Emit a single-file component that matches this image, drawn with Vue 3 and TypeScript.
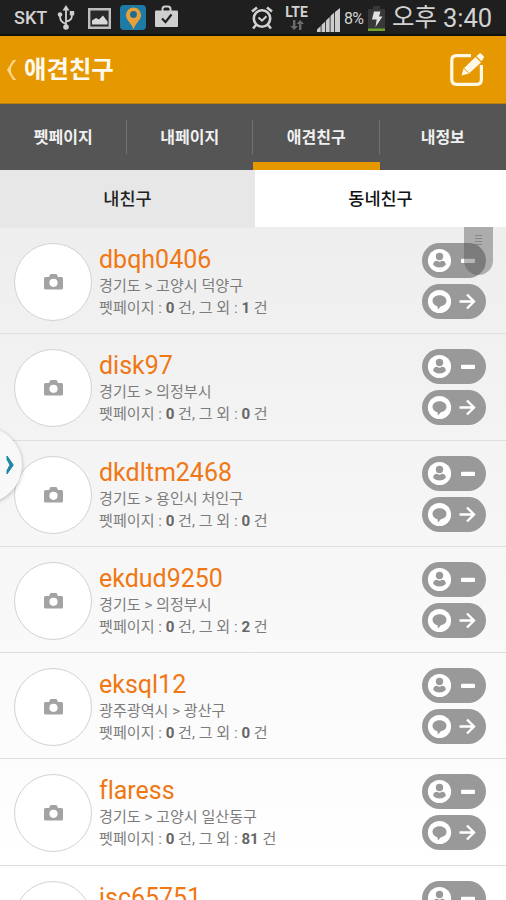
<script setup lang="ts">
interface Friend {
  name: string
  region?: string
  pets: number
  others: number
}

const tabs: string[] = ['펫페이지', '내페이지', '애견친구', '내정보']
const activeTab = 2

const friends: Friend[] = [
  { name: 'dbqh0406', region: '경기도 > 고양시 덕양구', pets: 0, others: 1 },
  { name: 'disk97', region: '경기도 > 의정부시', pets: 0, others: 0 },
  { name: 'dkdltm2468', region: '경기도 > 용인시 처인구', pets: 0, others: 0 },
  { name: 'ekdud9250', region: '경기도 > 의정부시', pets: 0, others: 2 },
  { name: 'eksql12', region: '광주광역시 > 광산구', pets: 0, others: 0 },
  { name: 'flaress', region: '경기도 > 고양시 일산동구', pets: 0, others: 81 },
  { name: 'jsc65751', pets: 0, others: 0 },
]
</script>

<template>
  <div class="screen">
    <header class="status">
      <div class="status-left">
        <span class="carrier">SKT</span>
        <svg class="usb" width="18" height="26" viewBox="0 0 18 26" fill="none" stroke="#cfcfcf" stroke-width="1.8">
          <path d="M9 3v19M9 19c-5-2-6-4-6-8M9 16.500c5-1 6-3 6-7" />
          <path d="M9 0l3.500 5.500h-7z" fill="#cfcfcf" stroke="none" />
          <circle cx="9" cy="22" r="2.800" fill="#cfcfcf" stroke="none" />
          <circle cx="3" cy="9.500" r="2.300" fill="#cfcfcf" stroke="none" />
          <path d="M12.800 6h4.400v4.400h-4.400z" fill="#cfcfcf" stroke="none" />
        </svg>
        <svg class="photo" width="23" height="21" viewBox="0 0 23 21">
          <path d="M1.200 1.200h20.600v18.600H1.200z" fill="#292929" stroke="#bdbdbd" stroke-width="2.400" />
          <path d="M4 16.500v-4l4-2.500 3 1.500 4-4 4.500 6v3z" fill="#d8d8d8" />
        </svg>
        <svg class="pin" width="26" height="25" viewBox="0 0 26 25">
          <rect width="26" height="25" rx="4" fill="#1d7ba6" />
          <path d="M13.500 24.500C12 18.500 6 15.500 6 10a7.500 7.500 0 0 1 15 0c0 5.500-6 8.500-7.500 14.500z" fill="#e8a13a" />
          <circle cx="13.500" cy="9.500" r="3.400" fill="#1d6c92" />
        </svg>
        <svg class="bag" width="23" height="23" viewBox="0 0 23 23">
          <path d="M7.500 7V4q0-2.500 2.500-2.500h3q2.500 0 2.500 2.500v3" fill="none" stroke="#cfcfcf" stroke-width="2" />
          <rect y="5.500" width="23" height="16.500" rx="1" fill="#cfcfcf" />
          <path d="M7 13.500l3.500 3.500 6-7.500" fill="none" stroke="#222" stroke-width="2.200" />
        </svg>
      </div>
      <div class="status-right">
        <svg class="alarm" width="24" height="25" viewBox="0 0 23 25" fill="none" stroke="#d2d2d2">
          <circle cx="11.500" cy="13.500" r="8.200" stroke-width="2.600" />
          <path d="M1.500 6.500l5-4M21.500 6.500l-5-4M5.500 20l-3 3.500M17.500 20l3 3.500" stroke-width="2.600" />
          <path d="M8 12.500l3.500 3.200 4.500-4.500" stroke-width="2" />
        </svg>
        <div class="network">
          <span class="lte">LTE</span>
          <svg width="14" height="10" viewBox="0 0 14 10" fill="#6b6b6b">
            <path d="M3 0h2.400v6H8L4.200 10 .4 6H3zM9 10h2.400V4H14L10.200 0 6.600 4H9z" />
          </svg>
        </div>
        <svg class="signal" width="23" height="24" viewBox="0 0 23 24" fill="#cdcdcd">
          <path d="M0 24v-2.500L3.700 18v6zM4.500 24v-7L8.200 13.500V24zM9 24V12.500L12.700 9v15zM13.500 24V8l3.700-3.500V24zM18 24V4l5-4v24z" />
        </svg>
        <span class="percent">8%</span>
        <svg class="battery" width="17" height="25" viewBox="0 0 17 25">
          <path d="M5 0h7v3h5v22H0V3h5z" fill="#383838" />
          <path d="M0 22.500h17V25H0z" fill="#71a52c" />
          <path d="M6 5.500h6.500L11 10.500h3.500L7.500 21l1.200-7.500H4z" fill="#e2e2e2" />
        </svg>
        <span class="ampm">오후</span>
        <span class="clock">3:40</span>
      </div>
    </header>

    <div class="titlebar">
      <svg class="back" width="10" height="20" viewBox="0 0 10 20">
        <path d="M9.500 0C4 6 4 8 4 10s0 4 5.500 10H6L0 10 6 0z" fill="#ffd58b" />
      </svg>
      <h1>애견친구</h1>
      <svg class="compose" width="34" height="34" viewBox="0 0 34 34">
        <path d="M21 2.700H6.500Q1.800 2.700 1.800 7.400v19.200q0 4.700 4.700 4.700h20.200q4.700 0 4.700-4.700V12" fill="none" stroke="#fff8e6" stroke-width="3.200" />
        <path d="M11.500 22.500l2-7L25.500 4l5.500 5.500L19 20.500zM26.500 3.200L29.200.7q1.200-.8 2.300.2l2 2q1 1.200 0 2.300L31.500 8.200z" fill="#fff8e6" />
        <path d="M13.800 15.200l5 4.800" stroke="#e69800" stroke-width="1" />
      </svg>
    </div>

    <nav class="tabs">
      <div v-for="(tab, i) in tabs" :key="tab" class="tab" :class="{ active: i === activeTab }">{{ tab }}</div>
    </nav>

    <div class="subtabs">
      <div class="subtab">내친구</div>
      <div class="subtab selected">동네친구</div>
    </div>

    <main class="list">
      <article v-for="friend in friends" :key="friend.name" class="row">
        <div class="avatar">
          <svg width="19" height="16" viewBox="0 0 19 16">
            <path d="M1.500 3H5l1-2.200Q6.300 0 7 0h5q.7 0 1 .8L14 3h3.500q1.500 0 1.500 1.500V14q0 1.500-1.500 1.500h-16Q0 15.500 0 14V4.500Q0 3 1.500 3z" fill="#a3a3a3" />
            <circle cx="9.500" cy="8.800" r="4.100" fill="#fff" />
          </svg>
        </div>
        <div class="info">
          <div class="name">{{ friend.name }}</div>
          <template v-if="friend.region">
            <div class="line">{{ friend.region }}</div>
            <div class="line">펫페이지 : <b>{{ friend.pets }}</b> 건, 그 외 : <b>{{ friend.others }}</b> 건</div>
          </template>
        </div>
        <div class="actions">
          <svg width="64" height="35" viewBox="0 0 64 35">
            <rect width="64" height="35" rx="17.500" fill="#999" />
            <circle cx="17.500" cy="17.500" r="11.600" fill="#fff" />
            <circle cx="17.500" cy="13.500" r="3.700" fill="#999" />
            <path d="M11.200 22q0-4.200 4-4.200 2.300 1.800 4.600 0 4 0 4 4.200-2.800 2.500-6.300 2.500T11.200 22z" fill="#999" />
            <rect x="39" y="15.800" width="14" height="4.200" rx="1" fill="#fff" />
          </svg>
          <svg width="64" height="35" viewBox="0 0 64 35">
            <rect width="64" height="35" rx="17.500" fill="#999" />
            <circle cx="17.500" cy="17.500" r="11.600" fill="#fff" />
            <path d="M17.500 11.200c4 0 7 2.300 7 5.600 0 3-2.400 5-5.700 5.500L16 25.400l-.6-3.200c-2.800-.7-4.900-2.600-4.900-5.400 0-3.300 3-5.600 7-5.600z" fill="#999" />
            <path d="M37.500 17.500h14M45 10.500l7 7-7 7" fill="none" stroke="#fff" stroke-width="2.400" />
          </svg>
        </div>
      </article>
    </main>

    <div class="scroll-thumb"><i></i><i></i><i></i><i></i></div>
    <div class="drawer-handle">
      <svg width="9" height="20" viewBox="0 0 9 20">
        <path d="M1 1l6.300 9L1 19V15.500L4 10 1 4.500z" fill="#1d86a3" stroke="#1d86a3" stroke-width="1" />
      </svg>
    </div>
  </div>
</template>

<style>
body {
  margin: 0;
}
</style>

<style scoped>
.screen {
  position: relative;
  width: 506px;
  height: 900px;
  overflow: hidden;
  display: flex;
  flex-direction: column;
  background: #eee;
  font-family: Roboto, 'Noto Sans CJK KR', sans-serif;
}
.status {
  flex: none;
  height: 36px;
  box-sizing: border-box;
  border-bottom: 2px solid #101010;
  background: #1f1f1f;
  display: flex;
  justify-content: space-between;
  color: #d2d2d2;
}
.status-left,
.status-right {
  display: flex;
  align-items: flex-start;
}
.carrier {
  width: 35px;
  margin: 8px 0 0 14px;
  font-size: 18px;
  line-height: 20px;
  font-weight: 500;
}
.usb {
  margin: 5px 0 0 8px;
}
.photo {
  margin: 8px 0 0 13px;
}
.pin {
  margin: 5px 0 0 9px;
}
.bag {
  margin: 5px 0 0 9px;
}
.alarm {
  margin: 5px 0 0;
}
.network {
  width: 27px;
  margin: 5px 0 0 9px;
  display: flex;
  flex-direction: column;
  align-items: center;
}
.lte {
  font-size: 14px;
  line-height: 15px;
  font-weight: 700;
}
.signal {
  margin: 8px 0 0 7px;
}
.percent {
  width: 22px;
  margin: 9px 0 0 4px;
  font-size: 16px;
  line-height: 20px;
  letter-spacing: -0.8px;
}
.battery {
  margin: 6px 0 0 2px;
}
.ampm {
  width: 45px;
  margin: 1px 0 0 7px;
  font-size: 24.500px;
  line-height: 34px;
  white-space: nowrap;
}
.clock {
  width: 48px;
  margin: 2px 15px 0 6px;
  font-size: 25.500px;
  line-height: 32px;
  white-space: nowrap;
}
.titlebar {
  flex: none;
  height: 68px;
  box-sizing: border-box;
  border-bottom: 1px solid #b97e12;
  background: #e69800;
  display: flex;
  align-items: center;
  padding: 1px 22px 0 7px;
}
h1 {
  flex: 1;
  margin: 0 0 0 7px;
  color: #fffaf0;
  font-size: 24.400px;
  line-height: 36px;
  font-weight: 700;
}
.tabs {
  flex: none;
  height: 66px;
  background: #555;
  display: flex;
}
.tab {
  position: relative;
  flex: 1;
  box-sizing: border-box;
  padding-top: 22px;
  text-align: center;
  color: #f0f0f0;
  font-size: 16px;
  line-height: 24px;
  font-weight: 700;
}
.tab + .tab::before {
  content: '';
  position: absolute;
  left: -1px;
  top: 16px;
  width: 1px;
  height: 34px;
  background: #727272;
}
.tab.active {
  border-bottom: 8px solid #e69800;
}
.subtabs {
  flex: none;
  height: 58px;
  display: flex;
}
.subtab {
  width: 255px;
  background: #e7e7e7;
  text-align: center;
  font-size: 17.500px;
  line-height: 59px;
  font-weight: 500;
  color: #222;
}
.subtab.selected {
  width: 251px;
  height: 57px;
  background: #fff;
  color: #111;
}
.list {
  flex: none;
  height: 672px;
  overflow: hidden;
  background: linear-gradient(#eee, #fff 95%);
}
.row {
  height: 106.250px;
  box-sizing: border-box;
  border-bottom: 1px solid #dedede;
  display: flex;
  padding: 15px 20px 0 14px;
}
.avatar {
  width: 78px;
  height: 78px;
  box-sizing: border-box;
  border: 1px solid #d2d2d2;
  border-radius: 50%;
  background: #fff;
  display: flex;
  align-items: center;
  justify-content: center;
}
.info {
  flex: 1;
  margin-left: 7px;
  white-space: nowrap;
}
.name {
  margin-top: 1px;
  color: #f07814;
  font-size: 25px;
  line-height: 32px;
  font-variant-ligatures: none;
}
.name + .line {
  margin-top: -1px;
}
.line {
  color: #7c7c7c;
  font-size: 15.100px;
  line-height: 22px;
}
.line b {
  color: #666;
}
.actions {
  display: flex;
  flex-direction: column;
  gap: 6px;
}
.scroll-thumb {
  position: absolute;
  left: 464px;
  top: 227px;
  width: 29px;
  height: 48px;
  box-sizing: border-box;
  padding-top: 8px;
  border-radius: 0 0 15px 15px;
  background: rgba(80, 80, 80, 0.42);
  display: flex;
  flex-direction: column;
  align-items: center;
  gap: 2px;
}
.scroll-thumb i {
  width: 7px;
  height: 1px;
  background: rgba(80, 80, 80, 0.4);
}
.drawer-handle {
  position: absolute;
  left: -54px;
  top: 427px;
  width: 76px;
  height: 76px;
  box-sizing: border-box;
  padding-right: 7px;
  border-radius: 50%;
  background: #f8f8f8;
  box-shadow: 0 1px 4px rgba(0, 0, 0, 0.28);
  display: flex;
  align-items: center;
  justify-content: flex-end;
}
</style>
